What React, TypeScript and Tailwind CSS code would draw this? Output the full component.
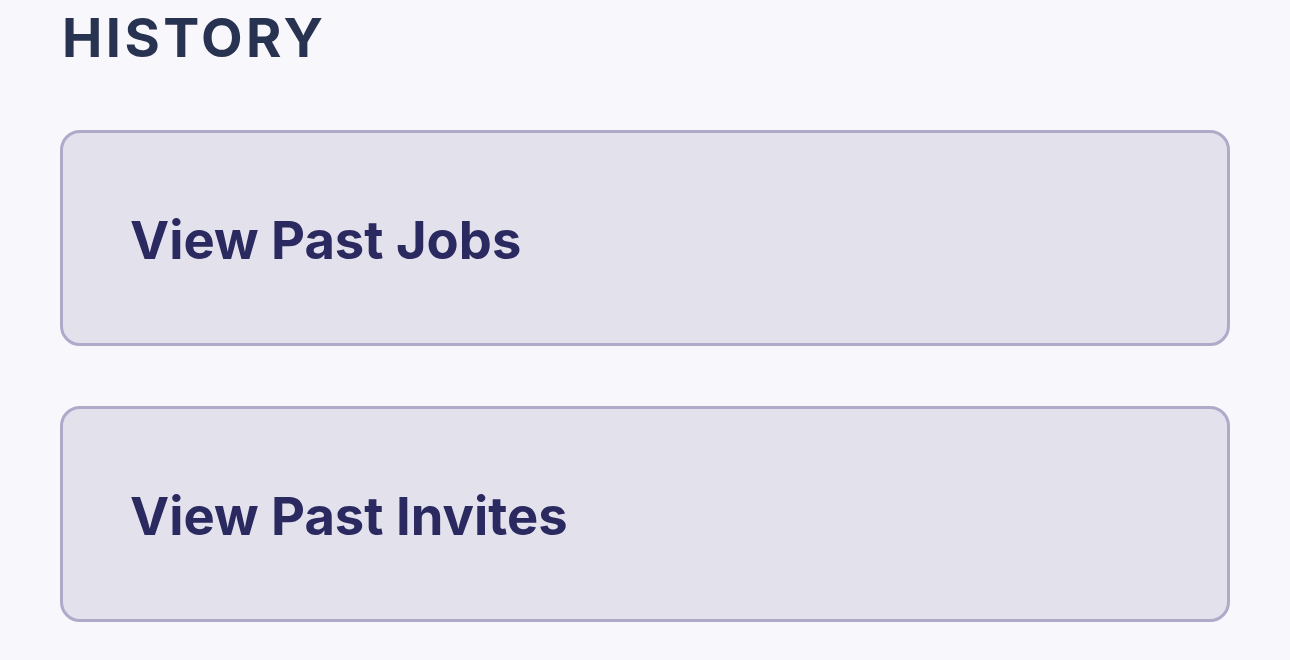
import React from "react";

const HistoryCard = ({ label }: { label: string }) => (
  <button className="flex h-[216px] w-full items-center rounded-[20px] border-[3px] border-[#aeaac9] bg-[#e3e1ec] pl-[67px] pt-[4px] text-left">
    <span className="text-[52.5px] font-bold leading-none text-[#2a2960]">
      {label}
    </span>
  </button>
);

export default function App() {
  return (
    <div
      className="min-h-[660px] w-full bg-[#f8f7fc] px-[60px]"
      style={{ fontFamily: "Inter, 'Noto Sans', sans-serif" }}
    >
      <h2 className="pt-[11px] pl-[2px] text-[54px] font-bold leading-none tracking-[0.064em] text-[#283352]">
        HISTORY
      </h2>
      <div className="mt-[65px] flex flex-col gap-[60px]">
        <HistoryCard label="View Past Jobs" />
        <HistoryCard label="View Past Invites" />
      </div>
    </div>
  );
}
